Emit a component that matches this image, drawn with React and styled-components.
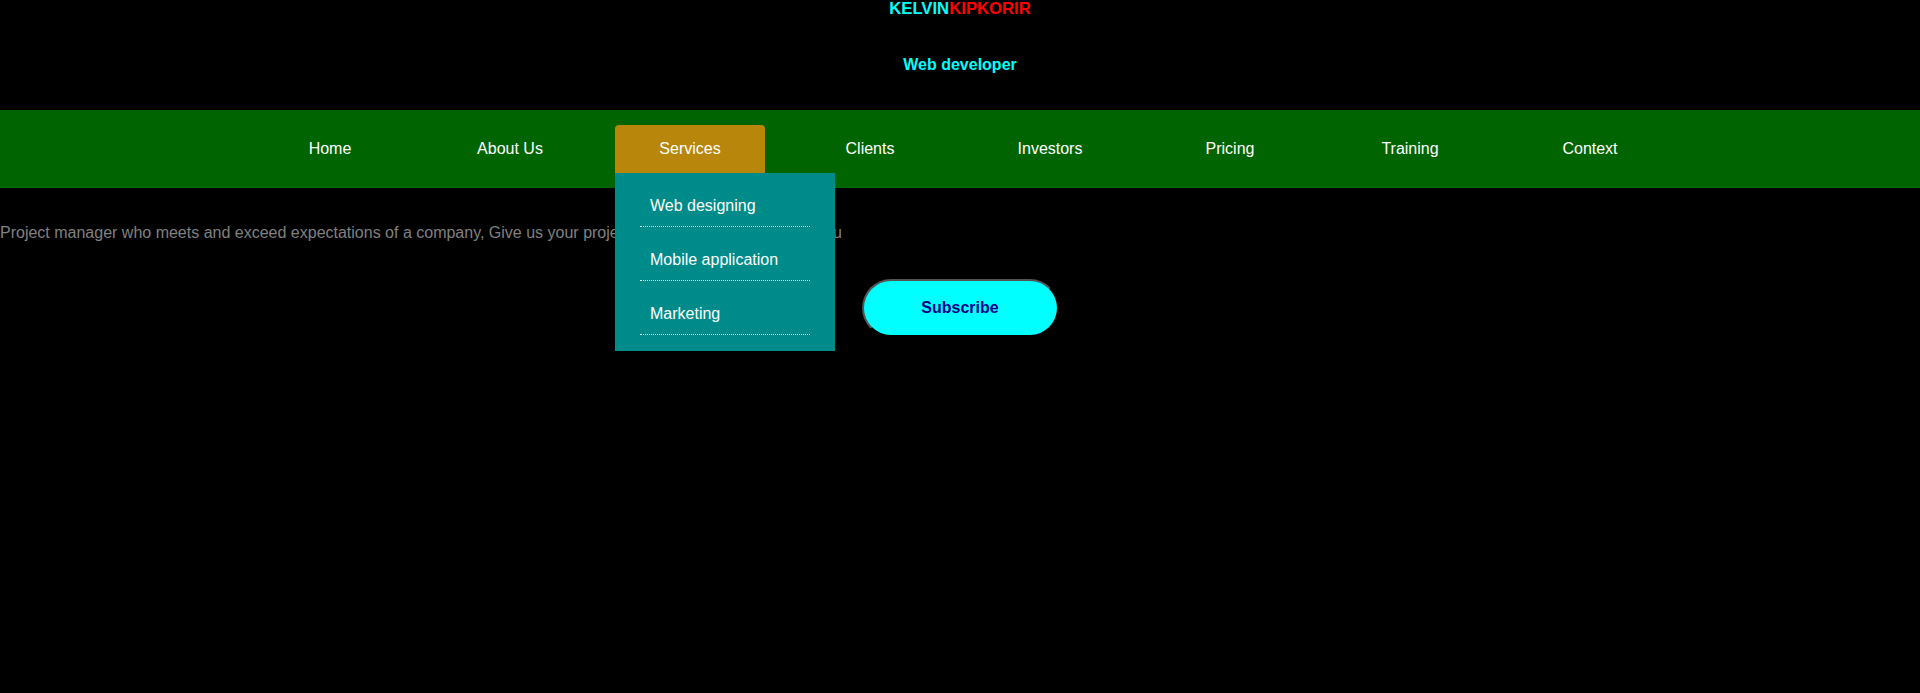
import React, { useState } from "react";
import styled, { createGlobalStyle } from "styled-components";

const GlobalStyle = createGlobalStyle`
  html, body {
    min-height: 100%;
  }
  body {
    margin: 0;
    background: #000000;
    font-family: "Liberation Sans", Arial, sans-serif;
  }
  #root {
    min-height: 100vh;
  }
`;

const Header = styled.header`
  text-align: center;
  padding-bottom: 36px;
`;

const Name = styled.h4`
  margin: 0;
  font-size: 16.7px;
  font-weight: bold;
  line-height: 18px;
`;

const NamePart = styled.span`
  color: ${(props) => props.color};
`;

const Role = styled.h4`
  margin: 38px 0 0;
  font-size: 16px;
  font-weight: bold;
  line-height: 18px;
  color: #00ffff;
`;

const NavBar = styled.nav`
  background-color: #006400;
  padding: 15px 0;
`;

const NavList = styled.ul`
  list-style: none;
  margin: 0;
  padding: 0;
  display: flex;
  justify-content: center;
`;

const NavItem = styled.li`
  position: relative;
  width: 150px;
  height: 48px;
  margin: 0 15px;
  line-height: 48px;
  text-align: center;
  font-size: 16px;
  color: #ffffff;
  border-radius: 4px 4px 0 0;
  background-color: ${(props) => (props.$active ? "#b8860b" : "transparent")};
  cursor: pointer;
`;

const Dropdown = styled.ul`
  position: absolute;
  top: 48px;
  left: 0;
  width: 220px;
  margin: 0;
  padding: 0 0 16px;
  list-style: none;
  background-color: #008b8b;
  text-align: left;
  z-index: 2;
`;

const DropdownItem = styled.li`
  margin: 0 25px;
  padding: 23px 10px 11px;
  line-height: 19px;
  font-size: 16px;
  color: #ffffff;
  border-bottom: 1px dotted #ffffff;
`;

const Intro = styled.p`
  margin: 36px 0 0;
  font-size: 16px;
  line-height: 18px;
  color: #808080;
`;

const SubscribeButton = styled.button`
  display: block;
  margin: 37px auto 0;
  width: 197px;
  height: 58px;
  border-radius: 30px;
  background-color: #00ffff;
  color: #00008b;
  font-family: "Liberation Sans", Arial, sans-serif;
  font-size: 16px;
  font-weight: bold;
  cursor: pointer;
`;

const links = ["Home", "About Us", "Services", "Clients", "Investors", "Pricing", "Training", "Context"];
const services = ["Web designing", "Mobile application", "Marketing"];

const App = () => {
  const [open, setOpen] = useState("Services");

  return (
    <>
      <GlobalStyle />
      <Header>
        <Name>
          <NamePart color="#00ffff">KELVIN</NamePart>
          <NamePart color="#ff0000">KIPKORIR</NamePart>
        </Name>
        <Role>Web developer</Role>
      </Header>
      <NavBar>
        <NavList>
          {links.map((link) => (
            <NavItem
              key={link}
              $active={open === link}
              onMouseEnter={() => link === "Services" && setOpen(link)}
            >
              {link}
              {link === "Services" && open === link && (
                <Dropdown>
                  {services.map((s) => (
                    <DropdownItem key={s}>{s}</DropdownItem>
                  ))}
                </Dropdown>
              )}
            </NavItem>
          ))}
        </NavList>
      </NavBar>
      <Intro>
        Project manager who meets and exceed expectations of a company, Give us your project and we shall deliver it for you
      </Intro>
      <SubscribeButton>Subscribe</SubscribeButton>
    </>
  );
};

export default App;
